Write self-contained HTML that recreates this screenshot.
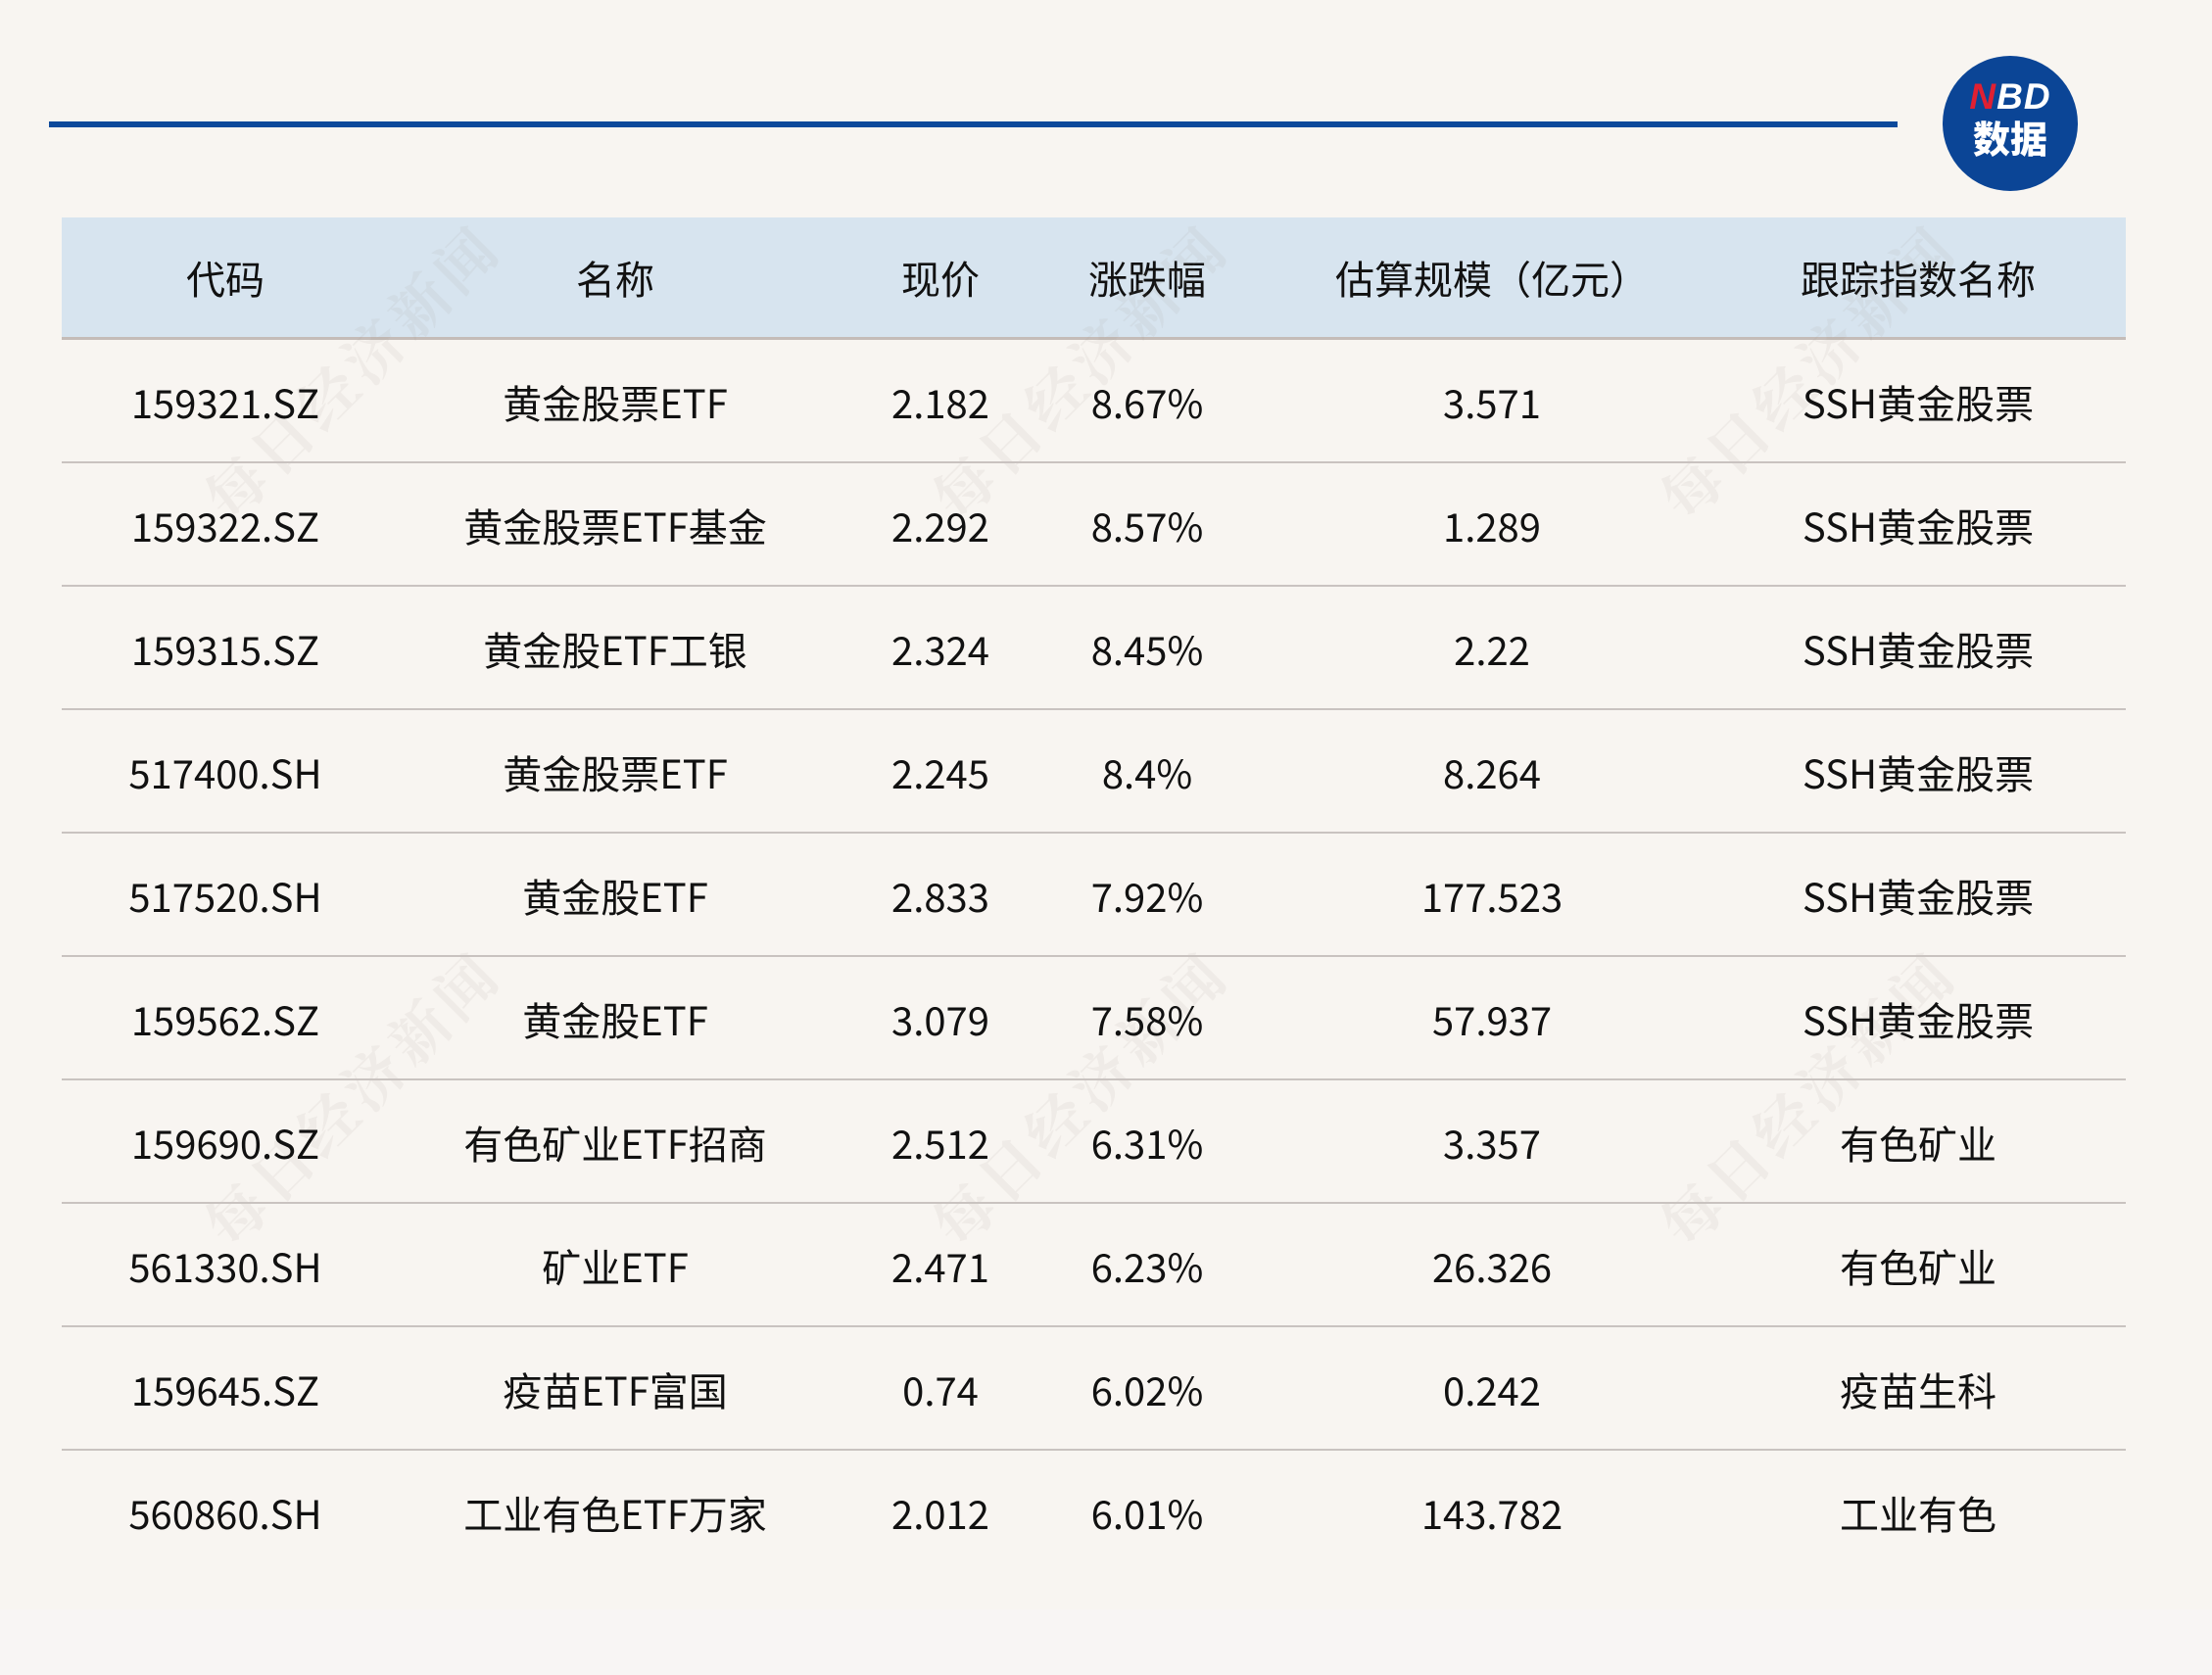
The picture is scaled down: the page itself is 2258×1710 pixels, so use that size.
<!DOCTYPE html>
<html><head><meta charset="utf-8"><style>
body{margin:0;width:2258px;height:1710px;background:#f8f5f1;position:relative;overflow:hidden;font-family:"Noto Sans CJK SC","Liberation Sans",sans-serif;color:#111}
.bot{position:absolute;left:0;top:1643px;width:2258px;height:67px;background:#f8f5f4}
.bl{position:absolute;left:50px;top:124px;width:1887px;height:6px;background:#0d4a9b}
.logo{position:absolute;left:1983px;top:57px;width:138px;height:138px;border-radius:50%;background:#0b4596;color:#fff;font-weight:bold;text-align:center;font-family:"Liberation Sans","Noto Sans CJK SC",sans-serif}
.logo .a{position:absolute;top:22px;left:0;width:100%;font-size:37px;font-style:italic;letter-spacing:1px;line-height:40px}
.logo .b{position:absolute;top:61px;left:0;width:100%;font-size:38px;line-height:44px;font-family:"Noto Sans CJK SC",sans-serif;font-weight:900}
.hd{position:absolute;left:63px;top:222px;width:2107px;height:122px;background:#d7e4ef;border-bottom:3px solid #c4bcb8}
.row{position:absolute;left:63px;width:2107px;height:124px;border-bottom:2px solid #c9c3c0}
.c{position:absolute;top:1px;height:100%;display:flex;align-items:center;justify-content:center;font-size:40px;line-height:1;white-space:nowrap;transform:translateX(-50%)}
.hd .c{top:0}
.wm{position:absolute;font-size:60px;font-weight:bold;color:rgba(150,140,135,0.09);transform:rotate(-45deg);white-space:nowrap;font-family:"Noto Serif CJK SC",serif;letter-spacing:6px}
</style></head><body>
<div class="bot"></div>
<div class="bl"></div>
<div class="logo"><div class="a"><span style="color:#e02032">N</span>BD</div><div class="b">数据</div></div>
<div class="hd">
<div class="c" style="left:167px">代码</div>
<div class="c" style="left:565px">名称</div>
<div class="c" style="left:897px">现价</div>
<div class="c" style="left:1108px">涨跌幅</div>
<div class="c" style="left:1460px">估算规模（亿元）</div>
<div class="c" style="left:1895px">跟踪指数名称</div>
</div>
<div class="wm" style="left:160px;top:335px">每日经济新闻</div>
<div class="wm" style="left:903px;top:335px">每日经济新闻</div>
<div class="wm" style="left:1646px;top:335px">每日经济新闻</div>
<div class="wm" style="left:160px;top:1077px">每日经济新闻</div>
<div class="wm" style="left:903px;top:1077px">每日经济新闻</div>
<div class="wm" style="left:1646px;top:1077px">每日经济新闻</div>
<div class="row" style="top:347px"><div class="c" style="left:167px">159321.SZ</div><div class="c" style="left:565px">黄金股票ETF</div><div class="c" style="left:897px">2.182</div><div class="c" style="left:1108px">8.67%</div><div class="c" style="left:1460px">3.571</div><div class="c" style="left:1895px">SSH黄金股票</div></div>
<div class="row" style="top:473px"><div class="c" style="left:167px">159322.SZ</div><div class="c" style="left:565px">黄金股票ETF基金</div><div class="c" style="left:897px">2.292</div><div class="c" style="left:1108px">8.57%</div><div class="c" style="left:1460px">1.289</div><div class="c" style="left:1895px">SSH黄金股票</div></div>
<div class="row" style="top:599px"><div class="c" style="left:167px">159315.SZ</div><div class="c" style="left:565px">黄金股ETF工银</div><div class="c" style="left:897px">2.324</div><div class="c" style="left:1108px">8.45%</div><div class="c" style="left:1460px">2.22</div><div class="c" style="left:1895px">SSH黄金股票</div></div>
<div class="row" style="top:725px"><div class="c" style="left:167px">517400.SH</div><div class="c" style="left:565px">黄金股票ETF</div><div class="c" style="left:897px">2.245</div><div class="c" style="left:1108px">8.4%</div><div class="c" style="left:1460px">8.264</div><div class="c" style="left:1895px">SSH黄金股票</div></div>
<div class="row" style="top:851px"><div class="c" style="left:167px">517520.SH</div><div class="c" style="left:565px">黄金股ETF</div><div class="c" style="left:897px">2.833</div><div class="c" style="left:1108px">7.92%</div><div class="c" style="left:1460px">177.523</div><div class="c" style="left:1895px">SSH黄金股票</div></div>
<div class="row" style="top:977px"><div class="c" style="left:167px">159562.SZ</div><div class="c" style="left:565px">黄金股ETF</div><div class="c" style="left:897px">3.079</div><div class="c" style="left:1108px">7.58%</div><div class="c" style="left:1460px">57.937</div><div class="c" style="left:1895px">SSH黄金股票</div></div>
<div class="row" style="top:1103px"><div class="c" style="left:167px">159690.SZ</div><div class="c" style="left:565px">有色矿业ETF招商</div><div class="c" style="left:897px">2.512</div><div class="c" style="left:1108px">6.31%</div><div class="c" style="left:1460px">3.357</div><div class="c" style="left:1895px">有色矿业</div></div>
<div class="row" style="top:1229px"><div class="c" style="left:167px">561330.SH</div><div class="c" style="left:565px">矿业ETF</div><div class="c" style="left:897px">2.471</div><div class="c" style="left:1108px">6.23%</div><div class="c" style="left:1460px">26.326</div><div class="c" style="left:1895px">有色矿业</div></div>
<div class="row" style="top:1355px"><div class="c" style="left:167px">159645.SZ</div><div class="c" style="left:565px">疫苗ETF富国</div><div class="c" style="left:897px">0.74</div><div class="c" style="left:1108px">6.02%</div><div class="c" style="left:1460px">0.242</div><div class="c" style="left:1895px">疫苗生科</div></div>
<div class="row" style="top:1481px;border-bottom:none"><div class="c" style="left:167px">560860.SH</div><div class="c" style="left:565px">工业有色ETF万家</div><div class="c" style="left:897px">2.012</div><div class="c" style="left:1108px">6.01%</div><div class="c" style="left:1460px">143.782</div><div class="c" style="left:1895px">工业有色</div></div>
</body></html>
